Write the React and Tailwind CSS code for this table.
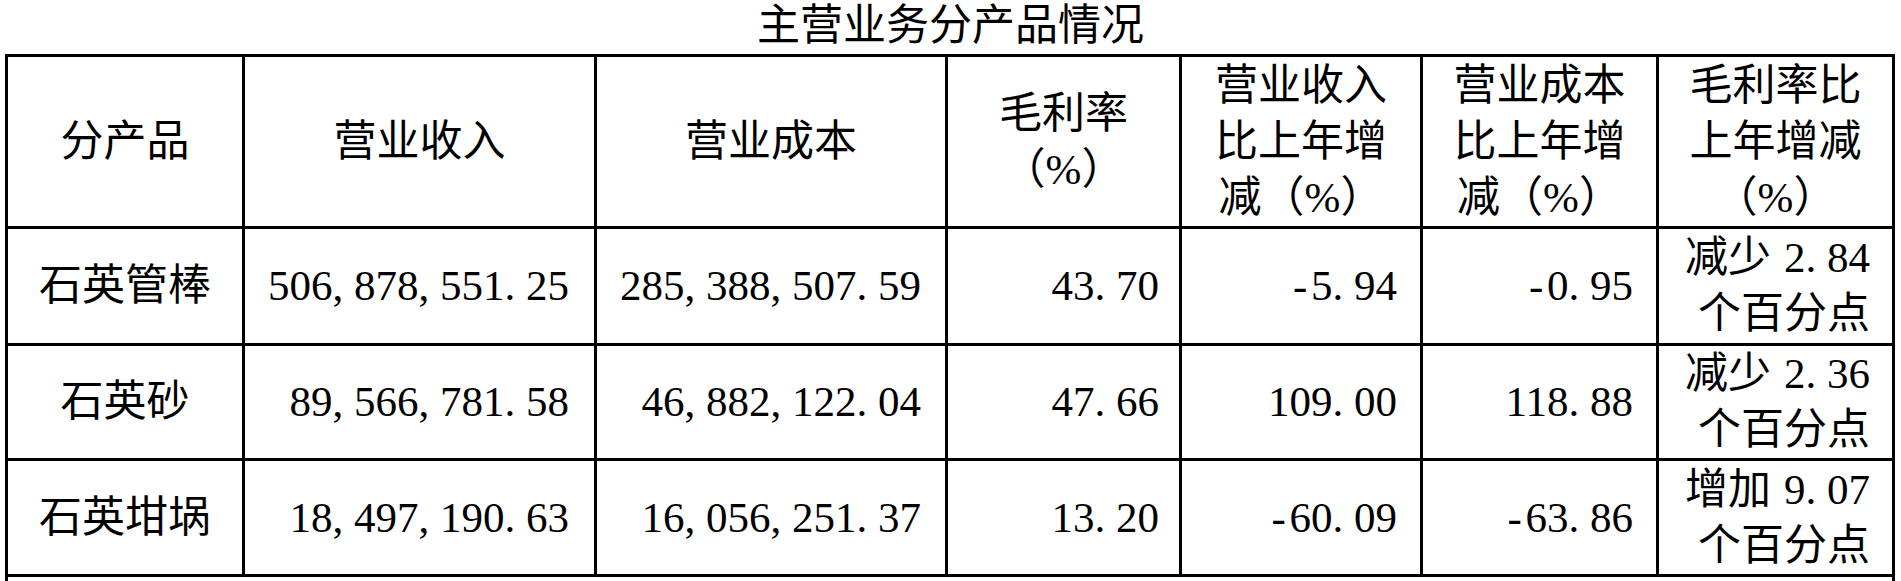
const rows = [
  {
    name: '石英管棒',
    rev: '506,878,551.25',
    cost: '285,388,507.59',
    margin: '43.70',
    revChg: '-5.94',
    costChg: '-0.95',
    marginChg: ['减少 2.84', '个百分点'],
    h: 'h-[117px]',
  },
  {
    name: '石英砂',
    rev: '89,566,781.58',
    cost: '46,882,122.04',
    margin: '47.66',
    revChg: '109.00',
    costChg: '118.88',
    marginChg: ['减少 2.36', '个百分点'],
    h: 'h-[114px]',
  },
  {
    name: '石英坩埚',
    rev: '18,497,190.63',
    cost: '16,056,251.37',
    margin: '13.20',
    revChg: '-60.09',
    costChg: '-63.86',
    marginChg: ['增加 9.07', '个百分点'],
    h: 'h-[116px]',
  },
]

function Num({ text }) {
  return (
    <>
      {text.split('').map((c, i) => {
        if (c === ',' || c === '.') {
          return <span key={i} className="inline-block w-[0.5em] text-left">{c}</span>
        }
        if (c === '-') {
          return <span key={i} className="inline-block w-[0.5em] text-center">{c}</span>
        }
        if (c === ' ') {
          return <span key={i} className="inline-block w-[0.3em]"></span>
        }
        return <span key={i}>{c}</span>
      })}
    </>
  )
}

const song = 'font-[Liberation_Serif,Noto_Sans_CJK_SC,serif]'
const cell = `${song} border-[3px] border-black align-middle p-0 text-[43px] leading-[56px]`

export default function App() {
  return (
    <div className={`${song} bg-white text-black min-h-[581px] text-[43px] leading-[56px]`}>
      <div className="h-[54px] text-center leading-[52px]">主营业务分产品情况</div>
      <table className={`${song} ml-[5px] w-[1887px] table-fixed border-collapse`}>
        <colgroup>
          <col className="w-[237px]" />
          <col className="w-[352px]" />
          <col className="w-[351px]" />
          <col className="w-[234px]" />
          <col className="w-[241px]" />
          <col className="w-[236px]" />
          <col className="w-[236px]" />
        </colgroup>
        <tbody>
          <tr className="h-[172px]">
            <td className={`${cell} text-center`}>分产品</td>
            <td className={`${cell} text-center`}>营业收入</td>
            <td className={`${cell} text-center`}>营业成本</td>
            <td className={`${cell} text-center`}>
              毛利率
              <br />
              （%）
            </td>
            <td className={`${cell} text-center`}>
              营业收入
              <br />
              比上年增
              <br />
              减（%）
            </td>
            <td className={`${cell} text-center`}>
              营业成本
              <br />
              比上年增
              <br />
              减（%）
            </td>
            <td className={`${cell} text-center`}>
              毛利率比
              <br />
              上年增减
              <br />
              （%）
            </td>
          </tr>
          {rows.map((r) => (
            <tr key={r.name} className={r.h}>
              <td className={`${cell} text-center`}>{r.name}</td>
              <td className={`${cell} text-right pr-[25px]`}>
                <Num text={r.rev} />
              </td>
              <td className={`${cell} text-right pr-[24px]`}>
                <Num text={r.cost} />
              </td>
              <td className={`${cell} text-right pr-[20px]`}>
                <Num text={r.margin} />
              </td>
              <td className={`${cell} text-right pr-[23px]`}>
                <Num text={r.revChg} />
              </td>
              <td className={`${cell} text-right pr-[23px]`}>
                <Num text={r.costChg} />
              </td>
              <td className={`${cell} text-right pr-[22px]`}>
                <Num text={r.marginChg[0]} />
                <br />
                {r.marginChg[1]}
              </td>
            </tr>
          ))}
          <tr className="h-[60px]">
            <td colSpan={7} className={cell}></td>
          </tr>
        </tbody>
      </table>
    </div>
  )
}
